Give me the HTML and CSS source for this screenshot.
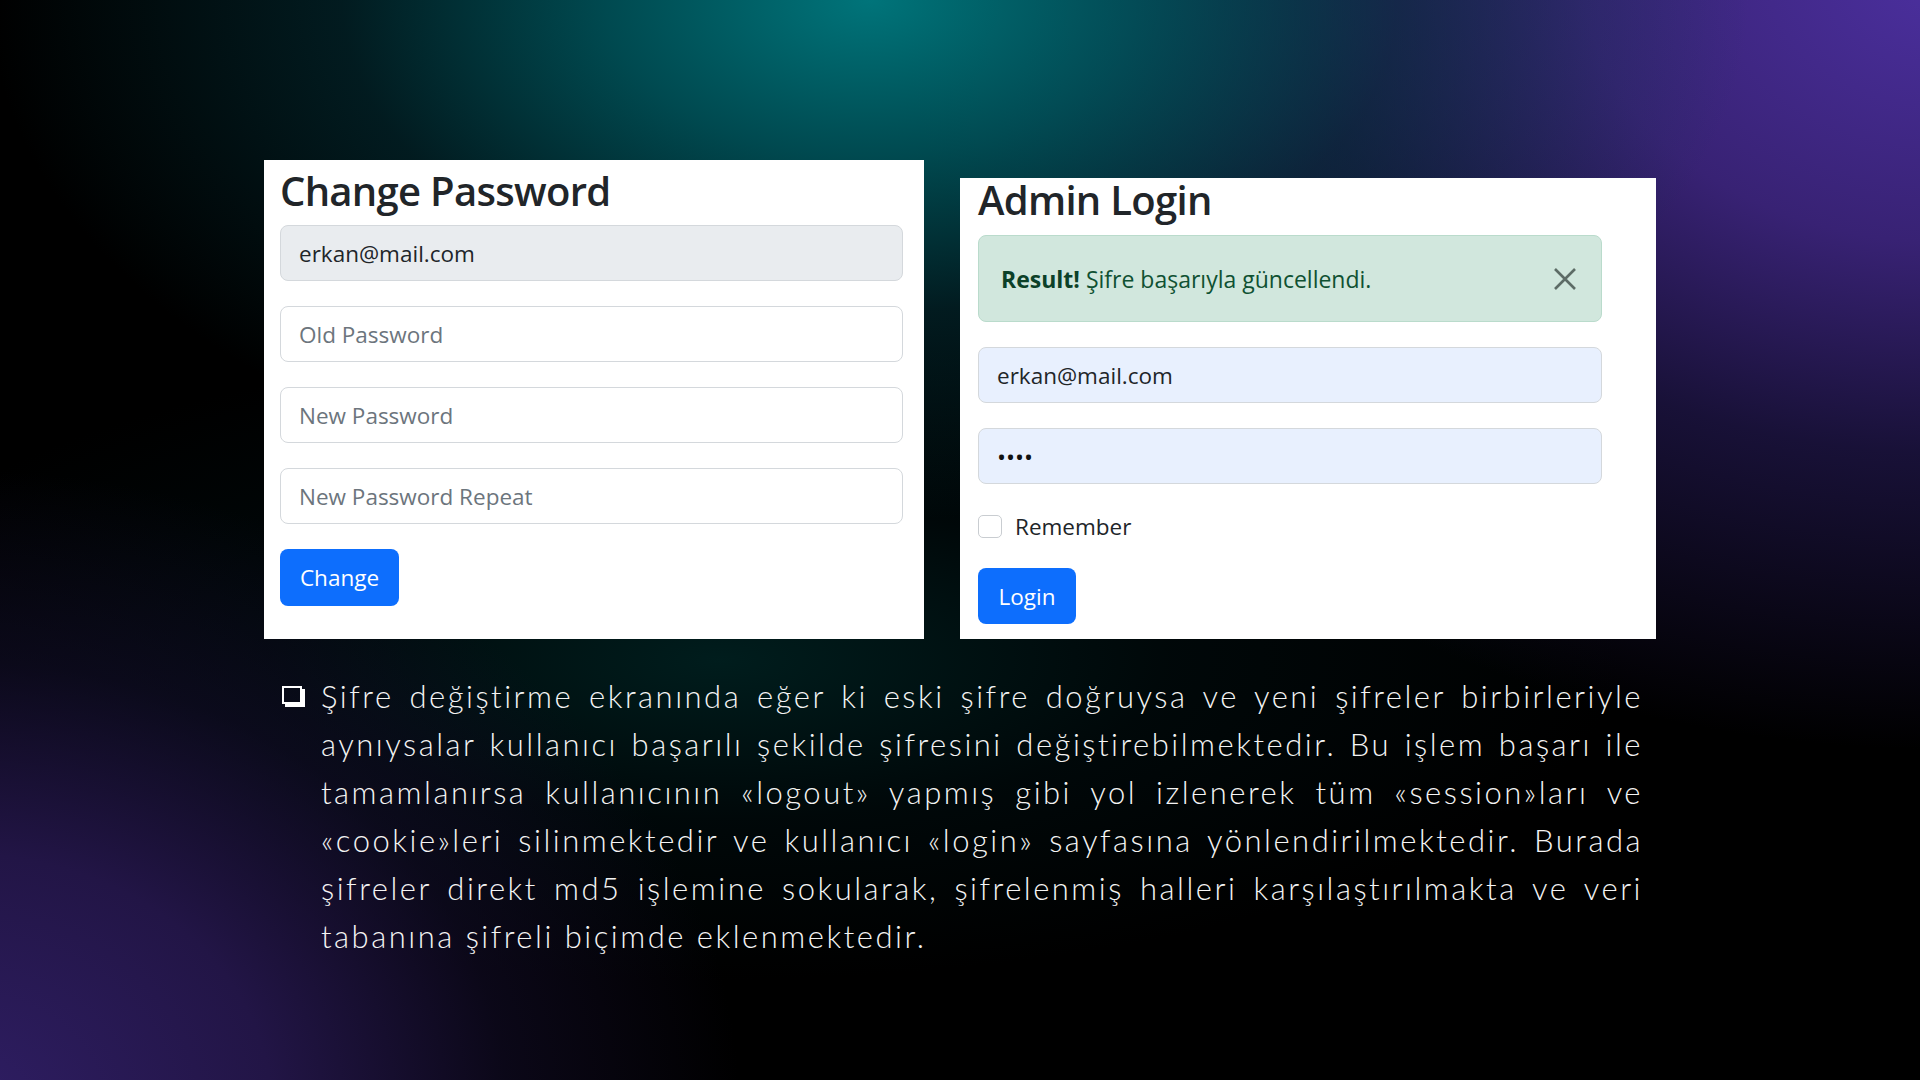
FILE: index.html
```html
<!DOCTYPE html>
<html lang="tr">
<head>
<meta charset="utf-8">
<title>Change Password / Admin Login</title>
<link rel="stylesheet" href="styles.css">
</head>
<body>
<main class="slide">
  <section class="cards">
    <div class="card card-left">
      <h3 class="card-title">Change Password</h3>
      <input class="field field-readonly" type="text" value="erkan@mail.com" readonly>
      <input class="field" type="password" placeholder="Old Password">
      <input class="field" type="password" placeholder="New Password">
      <input class="field" type="password" placeholder="New Password Repeat">
      <button class="btn btn-change" type="button">Change</button>
    </div>
    <div class="card card-right">
      <h3 class="card-title">Admin Login</h3>
      <div class="alert">
        <span class="alert-text"><strong>Result!</strong> Şifre başarıyla güncellendi.</span>
        <span class="alert-close" aria-label="Close">
          <svg width="24" height="24" viewBox="0 0 24 24"><path d="M2 2 L22 22 M22 2 L2 22" stroke="#5d6c66" stroke-width="2.6" fill="none"/></svg>
        </span>
      </div>
      <input class="field field-auto" type="text" value="erkan@mail.com">
      <input class="field field-auto field-pass" type="password" value="1234">
      <label class="check"><span class="check-box"></span><span>Remember</span></label>
      <button class="btn btn-login" type="button">Login</button>
    </div>
  </section>
  <section class="note">
    <span class="bullet"></span>
    <p class="note-text">Şifre değiştirme ekranında eğer ki eski şifre doğruysa ve yeni şifreler birbirleriyle aynıysalar kullanıcı başarılı şekilde şifresini değiştirebilmektedir. Bu işlem başarı ile tamamlanırsa kullanıcının «logout» yapmış gibi yol izlenerek tüm «session»ları ve «cookie»leri silinmektedir ve kullanıcı «login» sayfasına yönlendirilmektedir. Burada şifreler direkt md5 işlemine sokularak, şifrelenmiş halleri karşılaştırılmakta ve veri tabanına şifreli biçimde eklenmektedir.</p>
  </section>
</main>
</body>
</html>
```
FILE: styles.css
```css
* { box-sizing: border-box; }
html, body { margin: 0; padding: 0; }
body {
  width: 1920px;
  height: 1080px;
  overflow: hidden;
  background-color: #000;
  background-image:
    radial-gradient(ellipse 880px 520px at 870px 0px, rgba(0,116,122,1) 0%, rgba(0,92,100,0.8) 30%, rgba(4,60,70,0.45) 60%, rgba(0,0,0,0) 100%),
    radial-gradient(ellipse 1050px 780px at 1950px -30px, #4c30a0 0%, #382274 35%, rgba(40,28,92,0.6) 62%, rgba(0,0,0,0) 100%),
    radial-gradient(ellipse 780px 640px at -40px 1110px, #2f1e64 0%, #221546 40%, rgba(22,15,48,0.5) 70%, rgba(0,0,0,0) 100%),
    radial-gradient(ellipse 900px 320px at 720px 660px, rgba(0,48,48,0.6) 0%, rgba(0,30,35,0.25) 50%, rgba(0,0,0,0) 100%);
  font-family: "Open Sans", "Noto Sans", sans-serif;
}
.slide {
  padding: 160px 0 0 264px;
}
.cards {
  display: flex;
  align-items: flex-end;
  gap: 36px;
}
.card {
  background: #fff;
  display: flex;
  flex-direction: column;
  align-items: flex-start;
}
.card-left {
  width: 660px;
  height: 479px;
  padding: 6px 21px 0 16px;
}
.card-right {
  width: 696px;
  height: 461px;
  padding: 0 54px 0 18px;
}
.card-title {
  margin: 0;
  font-size: 40px;
  font-weight: 600;
  color: #212529;
  letter-spacing: -0.7px;
}
.card-left .card-title { line-height: 49px; margin-bottom: 10px; }
.card-right .card-title { line-height: 44px; margin-bottom: 13px; }
.field {
  display: block;
  width: 100%;
  height: 56px;
  margin: 0 0 25px;
  padding: 0 18px;
  border: 1.5px solid #d4d8dc;
  border-radius: 8px;
  background: #fff;
  font-family: "Open Sans", "Noto Sans", sans-serif;
  font-size: 22.5px;
  color: #212529;
  outline: none;
}
.field::placeholder { color: #6c757d; opacity: 1; }
.field-readonly { background: #e9ecef; }
.field-auto { background: #e8f0fe; }
.field-pass { font-size: 24px; letter-spacing: 0; color: #111; }
.btn {
  height: 57px;
  padding: 0 20px;
  border: 0;
  border-radius: 8px;
  background: #0d6efd;
  color: #fff;
  font-family: "Open Sans", "Noto Sans", sans-serif;
  font-size: 22.5px;
}
.btn-change { width: 119px; padding: 0; }
.btn-login { height: 56px; width: 98px; padding: 0; }
.alert {
  width: 100%;
  height: 87px;
  margin-bottom: 25px;
  display: flex;
  align-items: center;
  justify-content: space-between;
  padding: 0 24px 0 22px;
  background: #d1e7dd;
  border: 1.5px solid #badbcc;
  border-radius: 8px;
  color: #0f5132;
  font-size: 23px;
}
.alert-text strong { font-weight: 700; color: #0c4128; }
.alert-close { display: flex; width: 24px; height: 24px; }
.check {
  display: flex;
  align-items: center;
  gap: 13px;
  margin: 2px 0 26px;
  font-size: 22.5px;
  color: #212529;
}
.check-box {
  width: 24px;
  height: 23px;
  border: 1.5px solid #c9cdd1;
  border-radius: 5px;
  background: #fff;
}
.note {
  display: flex;
  align-items: flex-start;
  width: 1377px;
  margin: 33px 0 0 16px;
}
.bullet {
  flex: 0 0 auto;
  width: 20px;
  height: 18px;
  margin: 14px 19px 0 2px;
  border: 2.5px solid #fff;
  box-shadow: 3px 3px 0 #fff;
}
.note-text {
  margin: 0;
  width: 1322px;
  font-family: "Lato", "Noto Sans", sans-serif;
  font-weight: 300;
  font-size: 31px;
  line-height: 48px;
  letter-spacing: 2.5px;
  color: #f4f4f4;
  text-align: justify;
}
```
